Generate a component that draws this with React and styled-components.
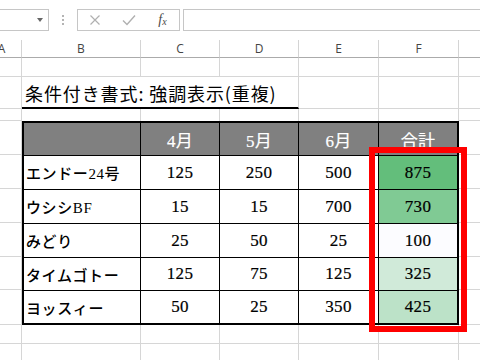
import React from "react";
import styled, { createGlobalStyle } from "styled-components";

const Global = createGlobalStyle`
  html, body { margin: 0; padding: 0; background: #fff; overflow: hidden; }
  body { width: 480px; height: 360px; font-family: "Noto Sans", sans-serif; }
`;

const Page = styled.div`
  width: 480px;
  height: 360px;
  overflow: hidden;
  background: #fff;
`;

const Toolbar = styled.div`
  display: flex;
  align-items: flex-start;
  height: 40px;
  padding-top: 9px;
  box-sizing: border-box;
`;

const NameBox = styled.div`
  flex-shrink: 0;
  width: 49px;
  height: 22px;
  box-sizing: border-box;
  border: 1px solid #c6c6c6;
  border-left: none;
  display: flex;
  align-items: center;
  justify-content: flex-end;
  padding-right: 5px;
`;

const Arrow = styled.div`
  width: 0;
  height: 0;
  border-left: 3.5px solid transparent;
  border-right: 3.5px solid transparent;
  border-top: 4px solid #666;
`;

const Dots = styled.div`
  flex-shrink: 0;
  width: 28px;
  height: 22px;
  display: flex;
  flex-direction: column;
  align-items: center;
  justify-content: center;
  gap: 2px;
`;

const Dot = styled.span`
  width: 2px;
  height: 2px;
  background: #b4b4b4;
`;

const FxBox = styled.div`
  flex-shrink: 0;
  width: 103px;
  height: 22px;
  box-sizing: border-box;
  border: 1px solid #c6c6c6;
  display: grid;
  grid-template-columns: 34px 34px 33px;
`;

const Slot = styled.div`
  display: flex;
  align-items: center;
  justify-content: center;
`;

const FxLabel = styled.span`
  font-family: "Liberation Serif", serif;
  font-style: italic;
  font-size: 14px;
  color: #4a4a4a;
  line-height: 1;
  sub {
    font-size: 10px;
    vertical-align: -1px;
  }
`;

const FormulaInput = styled.div`
  flex: 1;
  margin-left: 3px;
  height: 22px;
  box-sizing: border-box;
  border: 1px solid #c6c6c6;
  border-right: none;
`;

const Sheet = styled.div`
  display: grid;
  margin-left: -18px;
  grid-template-columns: 40px 119px 79px 79px 80px 80px 60px;
  grid-template-rows: 18px 19px 32px 12px 34px 34px 34px 34px 33px 35px 19px 19px;
`;

const ColHeader = styled.div`
  box-sizing: border-box;
  border-right: 1px solid #d4d4d4;
  border-bottom: 1px solid #ababab;
  display: flex;
  align-items: center;
  justify-content: center;
  font-family: "Open Sans", "Noto Sans", sans-serif;
  font-size: 12px;
  color: #444;
`;

const GridCell = styled.div`
  box-sizing: border-box;
  border-right: 1px solid #d6d6d6;
  border-bottom: ${(p) => (p.$noBottom ? "none" : "1px solid #d6d6d6")};
`;

const TitleCell = styled.div`
  grid-column: 2 / 5;
  box-sizing: border-box;
  border-right: 1px solid #d6d6d6;
  border-bottom: 2px solid #000;
  display: flex;
  align-items: flex-end;
  padding: 0 0 3px 3px;
  font-family: "Noto Sans CJK JP", sans-serif;
  font-size: 18px;
  line-height: 22px;
  letter-spacing: 0.9px;
  color: #000;
  white-space: nowrap;
`;

const Table = styled.div`
  grid-column: 2 / 7;
  grid-row: 5 / 11;
  position: relative;
  box-sizing: border-box;
  border: 2px solid #000;
  display: grid;
  grid-template-columns: 117px 79px 79px 80px 78px;
  grid-template-rows: 33px 34px 34px 34px 33px 32px;
`;

const TCell = styled.div`
  box-sizing: border-box;
  border-right: ${(p) => (p.$lastCol ? "none" : "1px solid #000")};
  border-bottom: ${(p) => (p.$lastRow ? "none" : "1px solid #000")};
  background: ${(p) => p.$bg || "transparent"};
  color: ${(p) => (p.$head ? "#fff" : "#000")};
  -webkit-text-stroke: ${(p) => (p.$left ? "0" : "0.2px")} ${(p) => (p.$head ? "#fff" : "#000")};
  display: flex;
  align-items: center;
  justify-content: ${(p) => (p.$left ? "flex-start" : "center")};
  padding-left: ${(p) => (p.$left ? "2px" : "0")};
  font-family: "Liberation Serif", "Noto Sans CJK JP", serif;
  font-size: ${(p) => (p.$left ? "15px" : "17px")};
  font-weight: ${(p) => (p.$left ? 500 : 400)};
  letter-spacing: ${(p) => (p.$left ? "0.6px" : "0.3px")};
  white-space: nowrap;
`;

const Highlight = styled.div`
  position: absolute;
  left: 345px;
  top: 24px;
  width: 98px;
  height: 185px;
  box-sizing: border-box;
  border: 6px solid #ff0000;
  pointer-events: none;
`;

const cols = ["A", "B", "C", "D", "E", "F", ""];

const head = ["", "4月", "5月", "6月", "合計"];
const rows = [
  ["エンドー24号", 125, 250, 500, 875],
  ["ウシシBF", 15, 15, 700, 730],
  ["みどり", 25, 50, 25, 100],
  ["タイムゴトー", 125, 75, 125, 325],
  ["ヨッスィー", 50, 25, 350, 425],
];

function scale(v) {
  const min = 100, max = 875;
  const t = (v - min) / (max - min);
  const a = [252, 252, 255];
  const b = [99, 190, 123];
  const c = a.map((x, i) => Math.round(x + (b[i] - x) * t));
  return `rgb(${c[0]},${c[1]},${c[2]})`;
}

export default function App() {
  const gridCells = [];
  for (let r = 2; r <= 12; r++) {
    for (let c = 1; c <= 7; c++) {
      if (r === 3 && c >= 2 && c <= 4) continue;
      if (r >= 5 && r <= 10 && c >= 2 && c <= 6) continue;
      gridCells.push(
        <GridCell
          key={`${r}-${c}`}
          style={{ gridRow: r, gridColumn: c }}
          $noBottom={r === 4 && c >= 2 && c <= 6}
        />
      );
    }
  }

  return (
    <Page>
      <Global />
      <Toolbar>
        <NameBox>
          <Arrow />
        </NameBox>
        <Dots>
          <Dot />
          <Dot />
          <Dot />
        </Dots>
        <FxBox>
          <Slot>
            <svg width="12" height="12" viewBox="0 0 12 12">
              <path d="M1.5 1.5 L10.5 10.5 M10.5 1.5 L1.5 10.5" stroke="#b0b0b0" strokeWidth="1.2" fill="none" />
            </svg>
          </Slot>
          <Slot>
            <svg width="14" height="12" viewBox="0 0 14 12">
              <path d="M1 6.5 L5 10.5 L13 1.5" stroke="#b0b0b0" strokeWidth="1.4" fill="none" />
            </svg>
          </Slot>
          <Slot>
            <FxLabel>
              f<sub>x</sub>
            </FxLabel>
          </Slot>
        </FxBox>
        <FormulaInput />
      </Toolbar>
      <Sheet>
        {cols.map((c, i) => (
          <ColHeader key={i} style={{ gridRow: 1, gridColumn: i + 1 }}>
            {c}
          </ColHeader>
        ))}
        {gridCells}
        <TitleCell style={{ gridRow: 3 }}>条件付き書式: 強調表示(重複)</TitleCell>
        <Table>
          {head.map((h, i) => (
            <TCell key={`h${i}`} $head $bg="#808080" $lastCol={i === 4}>
              {h}
            </TCell>
          ))}
          {rows.map((row, ri) =>
            row.map((v, ci) => (
              <TCell
                key={`${ri}-${ci}`}
                $left={ci === 0}
                $lastCol={ci === 4}
                $lastRow={ri === rows.length - 1}
                $bg={ci === 4 ? scale(v) : undefined}
              >
                {v}
              </TCell>
            ))
          )}
          <Highlight />
        </Table>
      </Sheet>
    </Page>
  );
}
